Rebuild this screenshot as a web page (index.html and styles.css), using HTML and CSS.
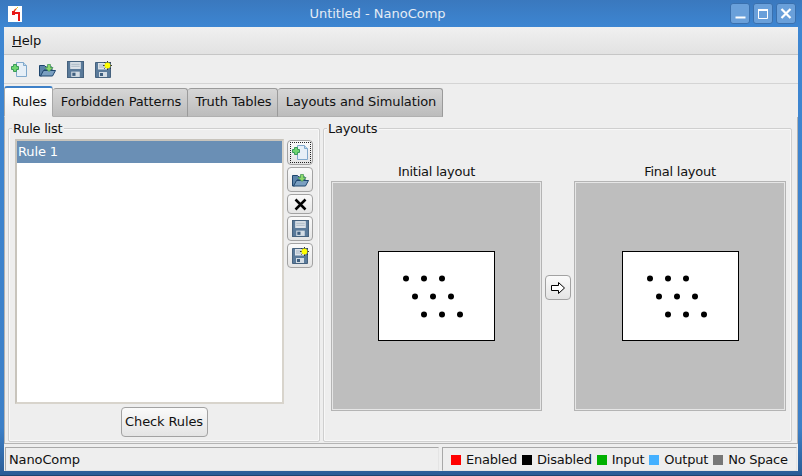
FILE: index.html
```html
<!DOCTYPE html>
<html lang="en">
<head>
<meta charset="UTF-8" />
<title>Untitled - NanoComp</title>
<link rel="stylesheet" href="styles.css">
</head>
<body>

<svg class="icon-defs" aria-hidden="true">
  <symbol id="i-new" viewBox="0 0 17 17">
    <path d="M5.500 1.500h7l3 3v11h-10z" fill="#e6eff7" stroke="#7fa8cc"/>
    <path d="M12.500 1.500v3h3" fill="#c4d9ea" stroke="#7fa8cc"/>
    <path d="M2.500 3.500h3v2h2v3h-2v2h-3v-2h-2v-3h2z" fill="#6fd66f" stroke="#3a9a5a"/>
  </symbol>
  <symbol id="i-open" viewBox="0 0 17 17">
    <path d="M.5 4.500h5l1.500 1.500h6v3h-8l-2.500 6h-2z" fill="#5c84aa" stroke="#1f466e"/>
    <path d="M4.500 9.500h12l-3 5.500h-12z" fill="#7a9fc1" stroke="#1f466e"/>
    <path d="M8.500 3.500h3v3h2.500l-4 4-4-4h2.500z" fill="#8ed86a" stroke="#4a9c5a" stroke-width=".8"/>
  </symbol>
  <symbol id="i-save" viewBox="0 0 16 16">
    <path d="M.5.5h15v15h-15z" fill="#5a7a9a" stroke="#46627e"/>
    <path d="M3 1h10v6.500h-10z" fill="#dde3e9"/>
    <path d="M4 3h8M4 5h8" stroke="#a8b6c4"/>
    <path d="M4 10h8v5h-8z" fill="#d4dde5"/>
    <path d="M5 11h3v3h-3z" fill="#3f5f7f"/>
  </symbol>
  <symbol id="i-saveas" viewBox="0 0 17 17">
    <svg x="0" y="1" width="16" height="16"><use href="#i-save"/></svg>
    <path d="M12.500 0v9M8 4.500h9M9.300 1.300l6.400 6.400M15.700 1.300l-6.400 6.400" stroke="#222" stroke-width=".9"/>
    <circle cx="12.500" cy="4.500" r="2.900" fill="#ffff00"/>
  </symbol>
</svg>

<div class="window">

  <header class="titlebar">
    <svg class="app-icon" viewBox="0 0 14 16" aria-hidden="true">
      <rect width="14" height="16" fill="#fff"/>
      <path d="M4 7h7M11 6v9" stroke="#e81818" stroke-width="2" fill="none"/>
      <rect x="4" y="5" width="3" height="4" fill="#e81818"/>
      <path d="M6 5l2-2" stroke="#e84818" stroke-width="1.500"/>
      <path d="M8 3l2-2" stroke="#e8c020" stroke-width="1"/>
    </svg>
    <span class="title">Untitled - NanoComp</span>
    <div class="win-btns">
      <button class="win-btn"><svg viewBox="0 0 18 19"><path d="M4.500 13.500h10" stroke="#fff" stroke-width="2"/></svg></button>
      <button class="win-btn"><svg viewBox="0 0 18 19"><path d="M4.500 6.500h9v8h-9z" fill="none" stroke="#fff"/><path d="M4 6h10" stroke="#fff" stroke-width="2"/></svg></button>
      <button class="win-btn"><svg viewBox="0 0 18 19"><path d="M4.500 5l9 9M13.500 5l-9 9" stroke="#fff" stroke-width="2.200"/></svg></button>
    </div>
  </header>

  <nav class="menubar"><span class="menu-item"><u>H</u>elp</span></nav>

  <div class="toolbar">
    <svg class="tool-icon"><use href="#i-new"/></svg>
    <svg class="tool-icon"><use href="#i-open"/></svg>
    <svg class="tool-icon"><use href="#i-save"/></svg>
    <svg class="tool-icon"><use href="#i-saveas"/></svg>
  </div>

  <div class="tabs">
    <div class="tab tab-active">Rules</div>
    <div class="tab tab-forbidden">Forbidden Patterns</div>
    <div class="tab tab-truth">Truth Tables</div>
    <div class="tab tab-layouts">Layouts and Simulation</div>
  </div>

  <main class="pane">
    <section class="group group-rules">
      <span class="group-title">Rule list</span>
      <div class="rules-body">
        <div class="rules-top">
          <ul class="rule-list">
            <li class="rule selected">Rule 1</li>
          </ul>
          <div class="side-btns">
            <button class="btn-icon btn-focus"><svg><use href="#i-new"/></svg></button>
            <button class="btn-icon"><svg><use href="#i-open"/></svg></button>
            <button class="btn-icon btn-short">
              <svg viewBox="0 0 17 17"><path d="M3.500 3.500l10 10M13.500 3.500l-10 10" stroke="#000" stroke-width="2.500"/></svg>
            </button>
            <button class="btn-icon"><svg><use href="#i-save"/></svg></button>
            <button class="btn-icon"><svg><use href="#i-saveas"/></svg></button>
          </div>
        </div>
        <button class="btn-check">Check Rules</button>
      </div>
    </section>

    <section class="group group-layouts">
      <span class="group-title">Layouts</span>
      <div class="layouts-body">
        <div class="layout layout-initial">
          <div class="layout-label">Initial layout</div>
          <div class="layout-view">
            <svg class="board" viewBox="0 0 115 88"><use href="#dots"/></svg>
          </div>
        </div>
        <button class="btn-arrow">
          <svg viewBox="0 0 16 14"><path d="M1.500 4.500h7v-3l6 5.500-6 5.500v-3h-7z" fill="#fff" stroke="#000"/></svg>
        </button>
        <div class="layout layout-final">
          <div class="layout-label">Final layout</div>
          <div class="layout-view">
            <svg class="board" viewBox="0 0 115 88">
              <g id="dots">
                <circle cx="27" cy="26.500" r="3"/><circle cx="45" cy="26.500" r="3"/><circle cx="63" cy="26.500" r="3"/>
                <circle cx="36" cy="44.500" r="3"/><circle cx="54" cy="44.500" r="3"/><circle cx="72" cy="44.500" r="3"/>
                <circle cx="45" cy="62.500" r="3"/><circle cx="63" cy="62.500" r="3"/><circle cx="81" cy="62.500" r="3"/>
              </g>
            </svg>
          </div>
        </div>
      </div>
    </section>
  </main>

  <footer class="statusbar">
    <div class="status-msg">NanoComp</div>
    <div class="legend">
      <span class="swatch sw-enabled"></span><span>Enabled</span>
      <span class="swatch sw-disabled"></span><span>Disabled</span>
      <span class="swatch sw-input"></span><span>Input</span>
      <span class="swatch sw-output"></span><span>Output</span>
      <span class="swatch sw-nospace"></span><span>No Space</span>
    </div>
  </footer>

</div>

</body>
</html>
```

FILE: styles.css
```css
html, body {
  margin: 0;
  padding: 0;
  overflow: hidden;
}
body {
  font-family: "DejaVu Sans", sans-serif;
  font-size: 13px;
  letter-spacing: -0.12px;
  color: #111;
}
button {
  font: inherit;
  letter-spacing: inherit;
  color: inherit;
  padding: 0;
}
svg {
  display: block;
}
.icon-defs {
  position: absolute;
  width: 0;
  height: 0;
}

.window {
  width: 802px;
  height: 476px;
  box-sizing: border-box;
  padding: 0 4px 4px 4px;
  display: flex;
  flex-direction: column;
  background: linear-gradient(#3a78be, #3d86d2 27px, #3d80c8 90%, #2a5c96);
  border-bottom: 1px solid #1d4470;
}

/* Barra de titulo */
.titlebar {
  height: 27px;
  flex: none;
  display: flex;
  align-items: center;
  padding-left: 4px;
  position: relative;
}
.app-icon {
  width: 14px;
  height: 16px;
}
.title {
  position: absolute;
  left: 0;
  right: 0;
  text-align: center;
  color: #e4ecf5;
  padding-right: 47px;
  letter-spacing: 0;
}
.win-btns {
  margin-left: auto;
  margin-right: 2px;
  display: flex;
  gap: 3px;
}
.win-btn {
  width: 18px;
  height: 19px;
  box-sizing: content-box;
  background: #6aa0da;
  border: 1px solid #3a70ae;
  border-radius: 3px;
}

/* Menu y toolbar */
.menubar {
  height: 28px;
  flex: none;
  box-sizing: border-box;
  padding: 6px 8px 0;
  background: linear-gradient(#f0f0f0, #e2e2e2);
  border-bottom: 1px solid #c6c6c6;
  line-height: 16px;
}
.toolbar {
  height: 29px;
  flex: none;
  box-sizing: border-box;
  display: flex;
  align-items: center;
  gap: 11px;
  padding: 0 0 0 7px;
  background: #eeeeee;
  border-bottom: 1px solid #d4d4d4;
}
.tool-icon {
  width: 17px;
  height: 17px;
}

/* Pestanas */
.tabs {
  height: 33px;
  flex: none;
  display: flex;
  align-items: flex-end;
  background: #eeeeee;
  position: relative;
  z-index: 1;
  margin-bottom: -1px;
}
.tab {
  height: 29px;
  box-sizing: border-box;
  padding: 4px 0 0 2px;
  text-align: center;
  line-height: 18px;
  background: linear-gradient(#d6d6d6, #bcbcbc);
  border: 1px solid #9a9a9a;
  border-bottom: 1px solid #b0b0b0;
  border-left: none;
  border-radius: 3px 3px 0 0;
}
.tab-active {
  width: 49px;
  height: 31px;
  background: linear-gradient(#ffffff, #eeeeee);
  border: 1px solid #a8a8a8;
  border-top: 2px solid #3d80c8;
  border-bottom: 1px solid #eeeeee;
  padding-top: 5px;
}
.tab-forbidden { width: 135px; }
.tab-truth { width: 90px; }
.tab-layouts { width: 165px; }

.pane {
  flex: 1;
  min-height: 0;
  display: flex;
  gap: 3px;
  padding: 11px 5px 1px 3px;
  background: #eeeeee;
  border: 1px solid #b4b4b4;
}

/* Grupos */
.group {
  position: relative;
  border: 1px solid #cfcfcf;
  box-shadow: inset 0 0 0 1px #f8f8f8;
  border-radius: 2px;
  box-sizing: border-box;
}
.group-title {
  position: absolute;
  top: -8px;
  left: 3px;
  padding: 0 2px 0 1px;
  background: #eeeeee;
  line-height: 15px;
  letter-spacing: -0.25px;
}
.group-rules { width: 312px; }
.group-layouts { flex: 1; }

.rules-body {
  height: 100%;
  box-sizing: border-box;
  padding: 10px 6px 4px 6px;
  display: flex;
  flex-direction: column;
}
.rules-top {
  flex: 1;
  display: flex;
  gap: 3px;
  min-height: 0;
}
.rule-list {
  list-style: none;
  margin: 0;
  padding: 0;
  width: 269px;
  box-sizing: border-box;
  background: #fff;
  border: 2px solid #c8c4bc;
  border-right-color: #d8d4cc;
  border-bottom-color: #d8d4cc;
}
.rule {
  height: 22px;
  line-height: 22px;
  padding-left: 1px;
}
.selected {
  background: #6a8fb5;
  color: #fff;
}
.side-btns {
  display: flex;
  flex-direction: column;
  gap: 2px;
  padding-top: 1px;
}
.btn-icon,
.btn-check,
.btn-arrow {
  background: linear-gradient(#fafafa, #e4e4e4);
  border: 1px solid #a2a2a2;
  border-radius: 4px;
  display: flex;
  align-items: center;
  justify-content: center;
}
.btn-icon {
  width: 26px;
  height: 25px;
}
.btn-icon svg {
  width: 17px;
  height: 17px;
}
.btn-short {
  height: 20px;
}
.btn-focus svg {
  outline: 1px dotted #222;
  outline-offset: 1px;
}
.btn-check {
  align-self: center;
  width: 87px;
  height: 30px;
  margin-top: 3px;
  padding-bottom: 2px;
}

/* Layouts */
.layouts-body {
  height: 100%;
  box-sizing: border-box;
  padding: 52px 0 30px 7px;
  display: flex;
  align-items: center;
  gap: 3px;
}
.layout {
  align-self: stretch;
  flex: none;
  position: relative;
}
.layout-initial { width: 211px; }
.layout-final { width: 212px; }
.layout-label {
  position: absolute;
  top: -17px;
  left: 0;
  right: 0;
  text-align: center;
  line-height: 16px;
  letter-spacing: -0.25px;
}
.layout-view {
  height: 100%;
  box-sizing: border-box;
  background: #bebebe;
  border: 1px solid #b4b4b4;
  box-shadow: inset 0 0 0 1px #e6e6e6;
  display: flex;
  align-items: center;
  justify-content: center;
}
.board {
  width: 117px;
  height: 90px;
  box-sizing: border-box;
  background: #fff;
  border: 1px solid #000;
}
.btn-arrow {
  flex: none;
  width: 26px;
  height: 25px;
  margin-bottom: 17px;
}
.btn-arrow svg {
  width: 16px;
  height: 14px;
}

/* Barra de estado */
.statusbar {
  height: 27px;
  flex: none;
  box-sizing: border-box;
  display: flex;
  gap: 3px;
  padding: 3px 1px 0 1px;
  background: #eeeeee;
}
.status-msg,
.legend {
  border: 1px solid #a8a8a8;
  border-right-color: #e4e4e4;
  border-bottom-color: #e4e4e4;
  box-sizing: border-box;
  line-height: 22px;
  padding-top: 1px;
}
.status-msg {
  width: 434px;
  padding-left: 3px;
}
.legend {
  flex: 1;
  display: flex;
  align-items: center;
  padding-left: 8px;
  gap: 5px;
  white-space: nowrap;
  letter-spacing: -0.22px;
}
.swatch {
  width: 10px;
  height: 10px;
  flex: none;
}
.sw-enabled { background: #ff0000; }
.sw-disabled { background: #000000; }
.sw-input { background: #00b000; }
.sw-output { background: #44b0ff; }
.sw-nospace { background: #777777; }
```
